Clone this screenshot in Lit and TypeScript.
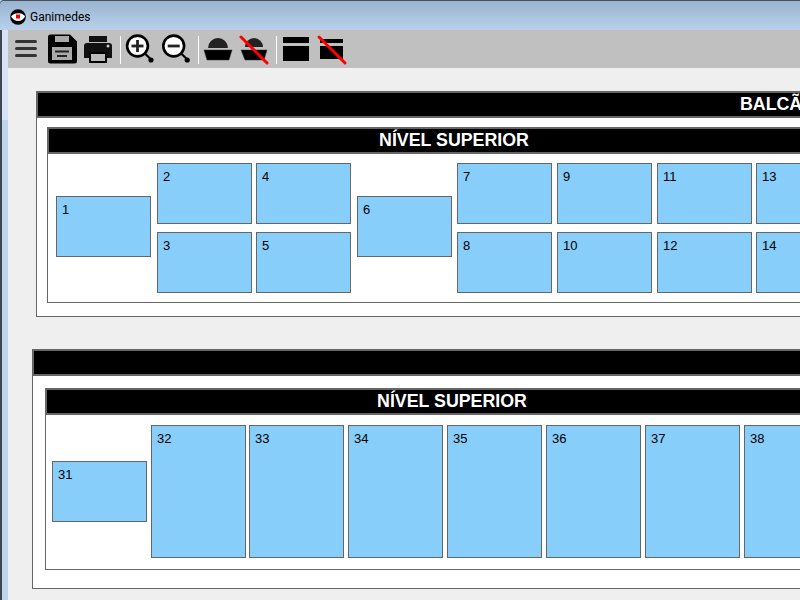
import { LitElement, html, css, svg } from "lit";
import { customElement } from "lit/decorators.js";

const burger = svg`<g fill="#333"><rect x="15" y="40" width="22" height="3" rx="1.5"/><rect x="15" y="47" width="22" height="3" rx="1.5"/><rect x="15" y="54" width="22" height="3" rx="1.5"/></g>`;

const slash = (x1: number, y1: number, x2: number, y2: number) =>
  svg`<line x1=${x1} y1=${y1} x2=${x2} y2=${y2} stroke="#f00" stroke-width="3" stroke-linecap="round"/>`;

const zoomIcon = (cx: number, plus: boolean) => svg`
  <circle cx=${cx} cy="46" r="10.4" fill="#fff" stroke="#000" stroke-width="2.6"/>
  <rect x=${cx - 6} y="44.6" width="12" height="2.8" fill="#222"/>
  ${plus ? svg`<rect x=${cx - 1.4} y="40" width="2.8" height="12" fill="#222"/>` : null}
  <line x1=${cx + 8} y1="54" x2=${cx + 13} y2="59" stroke="#000" stroke-width="2.2"/>
  <circle cx=${cx + 13.5} cy="60" r="2.6" fill="#000"/>`;

interface Card { n: number; x: number; y: number; h: number; }

@customElement("app-root")
export class AppRoot extends LitElement {
  static styles = css`
    :host { display: block; width: 800px; height: 600px; overflow: hidden; position: relative; font-family: "Liberation Sans", Arial, sans-serif; background: #b9d1ea; }
    .window { height: 600px; display: flex; flex-direction: column; border-top: 1px solid #4a4f55; border-left: 2px solid #40464d; box-sizing: border-box; background: linear-gradient(#d4e3f5 119px, #bdd4ec 119px); border-top-left-radius: 4px; }
    .title { height: 29px; margin-left: -2px; padding: 3px 0 0 10px; box-sizing: border-box; display: flex; align-items: center; gap: 4px; background: linear-gradient(#99b4d1, #b9d1ea); font: 12px Roboto, "Noto Sans", sans-serif; color: #000; flex: none; border-top-left-radius: 4px; }
    .title svg { flex: none; }
    .main { margin-left: 6px; flex: 1; min-height: 0; display: flex; flex-direction: column; background: #efefef; overflow: hidden; }
    .tools { height: 38px; flex: none; background: #c0c0c0; }
    .tools svg { display: block; }
    .area { flex: 1; position: relative; overflow: hidden; }
    .group { position: absolute; box-sizing: border-box; background: #fff; border: 1px solid #666; }
    .head { box-sizing: border-box; height: 27px; background: #000; border: 2px solid #666; border-width: 2px 0 2px 2px; margin: -1px -1px 0 -1px; color: #fff; font-size: 17.8px; font-weight: bold; text-align: center; line-height: 23px; white-space: nowrap; }
    .level { position: absolute; box-sizing: border-box; background: #fff; border: 1px solid #666; }
    .cards { position: relative; }
    .card { position: absolute; box-sizing: border-box; width: 95px; background: #87cefa; border: 1px solid #666; font-size: 13px; color: #000; padding: 5px 0 0 5px; line-height: 15px; }
  `;

  private cards1: Card[] = [
    { n: 1, x: 8, y: 42, h: 61 }, { n: 2, x: 109, y: 9, h: 61 }, { n: 3, x: 109, y: 78, h: 61 },
    { n: 4, x: 208, y: 9, h: 61 }, { n: 5, x: 208, y: 78, h: 61 }, { n: 6, x: 309, y: 42, h: 61 },
    { n: 7, x: 409, y: 9, h: 61 }, { n: 8, x: 409, y: 78, h: 61 }, { n: 9, x: 509, y: 9, h: 61 },
    { n: 10, x: 509, y: 78, h: 61 }, { n: 11, x: 609, y: 9, h: 61 }, { n: 12, x: 609, y: 78, h: 61 },
    { n: 13, x: 708, y: 9, h: 61 }, { n: 14, x: 708, y: 78, h: 61 },
  ];

  private cards2: Card[] = [
    { n: 31, x: 6, y: 46, h: 61 }, { n: 32, x: 105, y: 10, h: 133 }, { n: 33, x: 203, y: 10, h: 133 },
    { n: 34, x: 302, y: 10, h: 133 }, { n: 35, x: 401, y: 10, h: 133 }, { n: 36, x: 500, y: 10, h: 133 },
    { n: 37, x: 599, y: 10, h: 133 }, { n: 38, x: 698, y: 10, h: 133 },
  ];

  private renderCards(list: Card[]) {
    return html`<div class="cards">${list.map(c => html`<div class="card" style="left:${c.x}px;top:${c.y}px;height:${c.h}px">${c.n}</div>`)}</div>`;
  }

  private renderTools() {
    return html`<svg width="792" height="38" viewBox="8 30 792 38">
      ${burger}
      <path fill="#000" d="M50 34.5h20l7 7V61a2.5 2.5 0 0 1-2.5 2.500H50.500A2.500 2.500 0 0 1 48 61V37a2.500 2.500 0 0 1 2-2.500z"/>
      <rect x="55" y="36" width="14" height="6" fill="#aaa"/>
      <rect x="52" y="47" width="20" height="13" fill="#aaa"/>
      <rect x="55" y="50.500" width="14" height="2" fill="#222"/><rect x="57" y="55" width="10" height="2" fill="#222"/>
      <rect x="89" y="36" width="18" height="6" fill="#111"/>
      <path fill="#111" d="M87 43h22a3 3 0 0 1 3 3v12h-5V52H89v6h-5V46a3 3 0 0 1 3-3z"/>
      <rect x="90" y="53" width="16" height="9" fill="#bbb" stroke="#000" stroke-width="2"/>
      <circle cx="108" cy="46" r="1.500" fill="#ccc"/>
      <rect x="120" y="36" width="1" height="28" fill="#fff"/>
      ${zoomIcon(137.500, true)}
      ${zoomIcon(173.700, false)}
      <rect x="198" y="36" width="1" height="28" fill="#fff"/>
      <path fill="#222" d="M208 48a10 10 0 0 1 20 0z"/>
      <path fill="#000" stroke="#333" stroke-width=".5" d="M204 50h28l-3 10h-22z"/>
      <path fill="#222" d="M245 47a9 9 0 0 1 18 0z"/>
      <path fill="#000" stroke="#333" stroke-width=".5" d="M241 50h26l-3 10h-19z"/>
      ${slash(241, 37, 267, 63)}
      <rect x="276" y="36" width="1" height="28" fill="#fff"/>
      <rect x="283" y="37" width="26" height="6" fill="#000"/>
      <rect x="283" y="46" width="26" height="15" fill="#000"/>
      <rect x="320" y="39" width="23" height="4" fill="#000"/>
      <rect x="320" y="46" width="23" height="13" fill="#000"/>
      ${slash(319, 37, 345, 63)}
    </svg>`;
  }

  render() {
    return html`<div class="window">
      <div class="title">
        <svg width="16" height="16" viewBox="0 0 16 16"><circle cx="8" cy="8" r="7.800" fill="#000"/><path d="M1 7.500C3 4.500 7 3.500 11 4.500c2 .5 3.300 1.600 4 3-1 2.500-4 4.500-7 4.500-3 0-5.500-2-7-4.500z" fill="#fff"/><rect x="6" y="5.500" width="4" height="4" fill="#e00"/></svg>
        <span>Ganimedes</span>
      </div>
      <div class="main">
        <div class="tools">${this.renderTools()}</div>
        <div class="area">
          <div class="group" style="left:28px;top:23px;width:1482px;height:226px">
            <div class="head">BALCÃO</div>
            <div class="level" style="left:10px;top:35px;width:812px;height:176px">
              <div class="head">NÍVEL SUPERIOR</div>
              ${this.renderCards(this.cards1)}
            </div>
          </div>
          <div class="group" style="left:24px;top:281px;width:900px;height:240px">
            <div class="head"></div>
            <div class="level" style="left:12px;top:38px;width:812px;height:182px">
              <div class="head">NÍVEL SUPERIOR</div>
              ${this.renderCards(this.cards2)}
            </div>
          </div>
        </div>
      </div>
    </div>`;
  }
}
